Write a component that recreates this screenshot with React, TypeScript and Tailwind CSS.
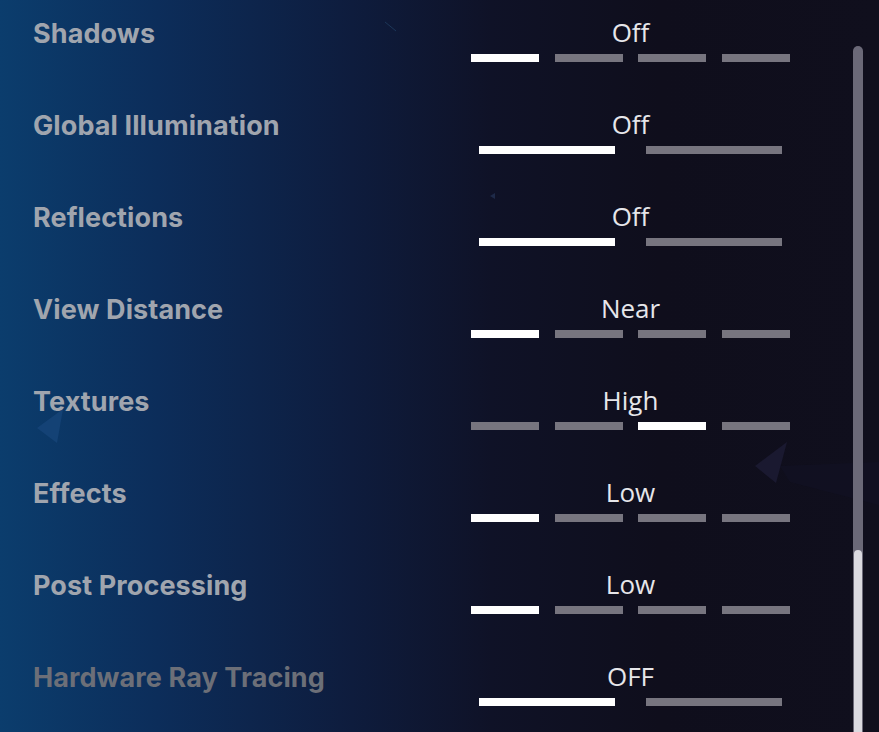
const rows = [
    { label: 'Shadows', value: 'Off', segments: 4, active: 0 },
    { label: 'Global Illumination', value: 'Off', segments: 2, active: 0 },
    { label: 'Reflections', value: 'Off', segments: 2, active: 0 },
    { label: 'View Distance', value: 'Near', segments: 4, active: 0 },
    { label: 'Textures', value: 'High', segments: 4, active: 2 },
    { label: 'Effects', value: 'Low', segments: 4, active: 0 },
    { label: 'Post Processing', value: 'Low', segments: 4, active: 0 },
    { label: 'Hardware Ray Tracing', value: 'OFF', segments: 2, active: 0, disabled: true },
]

function Segments({ count, active }: { count: number; active: number }) {
    const items = Array.from({ length: count })
    if (count === 2) {
        return (
            <div className="mt-[7px] flex w-[303px] gap-[31px]">
                {items.map((_, i) => (
                    <span key={i} className={`h-2 flex-1 ${i === active ? 'bg-white' : 'bg-[#77757f]'}`}></span>
                ))}
            </div>
        )
    }
    return (
        <div className="mt-[7px] flex w-[319px] gap-[15.7px]">
            {items.map((_, i) => (
                <span key={i} className={`h-2 flex-1 ${i === active ? 'bg-white' : 'bg-[#77757f]'}`}></span>
            ))}
        </div>
    )
}

function Decorations() {
    return (
        <svg className="pointer-events-none absolute inset-0" width="879" height="732" viewBox="0 0 879 732">
            <polygon points="37,428 63,409 57,443" fill="#174579" opacity="0.8" />
            <polygon points="755,466 787,442 776,483" fill="#1a1930" />
            <polygon points="780,466 879,462 879,505 790,482" fill="#15142a" opacity="0.35" />
            <polygon points="490,196 495,193 495,199" fill="#1e2a48" />
            <line x1="385" y1="22" x2="396" y2="31" stroke="#1c3658" strokeWidth="1" />
        </svg>
    )
}

export default function App() {
    return (
        <div className="relative flex h-[732px] w-[879px] overflow-hidden bg-[linear-gradient(to_right,#0b3d6d_0%,#0c2d5a_18%,#0e1c3d_40%,#0f1227_56%,#0f0e1c_75%,#100f1d_100%)]">
            <Decorations />
            <div className="relative flex flex-1 flex-col pt-[18px]">
                {rows.map((row) => (
                    <div key={row.label} className="flex h-[92px] shrink-0 items-start pl-[33px]">
                        <span
                            className={`w-[438px] text-[27px] leading-[32px] font-bold tracking-[0.1px] ${
                                row.disabled ? 'text-[#6c6f78]' : 'text-[#a0a5ae]'
                            }`}
                            style={{ fontFamily: 'Inter, sans-serif' }}
                        >
                            {row.label}
                        </span>
                        <div className="-mt-px flex w-[319px] flex-col items-center">
                            <span
                                className="text-[26px] leading-[30px] font-medium text-[#e6e6ea]"
                                style={{ fontFamily: '"Open Sans", sans-serif' }}
                            >
                                {row.value}
                            </span>
                            <Segments count={row.segments} active={row.active} />
                        </div>
                    </div>
                ))}
            </div>
            <div className="relative mr-[16px] flex w-[10px] flex-col pt-[46px]">
                <div className="flex flex-1 flex-col justify-end rounded-t-full bg-[#6b6978] px-px">
                    <div className="h-[182px] rounded-t-full bg-[#dad9df]"></div>
                </div>
            </div>
        </div>
    )
}
